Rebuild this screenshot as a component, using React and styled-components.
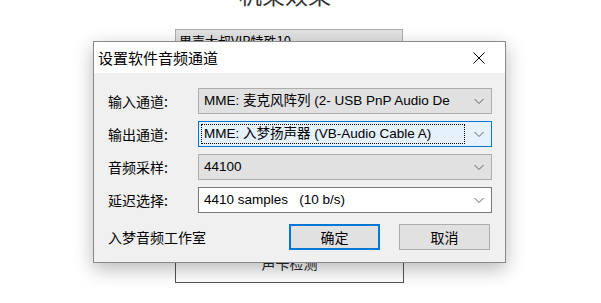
import React from "react";
import styled, { createGlobalStyle } from "styled-components";

const Global = createGlobalStyle`
  html, body { margin: 0; padding: 0; background: #fff; }
  body {
    width: 601px; height: 303px; overflow: hidden;
    font-family: "Liberation Sans", "Noto Sans CJK SC", sans-serif;
  }
`;

const Page = styled.div`
  position: relative;
  width: 601px;
  height: 303px;
  overflow: hidden;
`;

const Back = styled.div`
  display: flex;
  flex-direction: column;
  align-items: flex-start;
  padding-left: 175px;
`;

const Heading = styled.div`
  margin: -21px 0 0 64px;
  font-family: "Noto Sans CJK SC", sans-serif;
  font-size: 23px;
  line-height: 30px;
  color: #333;
`;

const BackSelect = styled.div`
  margin-top: 20px;
  width: 228px;
  height: 22px;
  box-sizing: border-box;
  border: 1px solid #adadad;
  background: #e1e1e1;
  font-family: "Noto Sans CJK SC", sans-serif;
  font-size: 13px;
  line-height: 22px;
  padding-left: 3px;
  color: #000;
`;

const BackButton = styled.div`
  margin-top: 202px;
  width: 229px;
  height: 30px;
  box-sizing: border-box;
  border: 1px solid #555;
  display: flex;
  align-items: flex-start;
  justify-content: center;
  font-family: "Noto Sans CJK SC", sans-serif;
  font-size: 14px;
  line-height: 19px;
  color: #222;
`;

const Dialog = styled.div`
  position: absolute;
  left: 93px;
  top: 41px;
  width: 413px;
  height: 222px;
  box-sizing: border-box;
  border: 1px solid #8a8a8a;
  background: #f0f0f0;
  box-shadow: 0 6px 18px rgba(0, 0, 0, 0.28);
  display: flex;
  flex-direction: column;
`;

const TitleBar = styled.div`
  height: 31px;
  background: #fff;
  display: flex;
  align-items: center;
  justify-content: space-between;
  padding: 0 20px 0 4px;
  font-family: "Noto Sans CJK SC", sans-serif;
  font-size: 15px;
  color: #000;
`;

const Body = styled.div`
  display: flex;
  flex-direction: column;
  gap: 7px;
  padding: 15px 13px 0 14px;
`;

const Row = styled.div`
  display: flex;
  align-items: center;
  height: 26px;
`;

const Label = styled.div`
  width: 90px;
  font-family: "Noto Sans CJK SC", sans-serif;
  font-size: 14px;
  color: #000;
`;

const Combo = styled.div`
  flex: 1;
  height: 26px;
  box-sizing: border-box;
  border: 1px solid ${p => (p.$focus ? "#0078d7" : p.$white ? "#7a7a7a" : "#adadad")};
  background: ${p => (p.$focus ? "#e5f1fb" : p.$white ? "#fff" : "#e1e1e1")};
  display: flex;
  align-items: center;
  padding: 2px 0 2px 2px;
`;

const ComboText = styled.div`
  flex: 1;
  height: 20px;
  box-sizing: border-box;
  border: 1px dotted ${p => (p.$focus ? "#000" : "transparent")};
  padding-left: 2px;
  margin-right: ${p => (p.$focus ? "24px" : "0")};
  font-size: 13.5px;
  line-height: 18px;
  color: #000;
  white-space: nowrap;
  overflow: hidden;
`;

const Chevron = styled.svg`
  width: 24px;
  flex: none;
  margin-left: ${p => (p.$focus ? "-22px" : "0")};
`;

const Footer = styled.div`
  display: flex;
  align-items: center;
  margin-top: 4px;
`;

const Studio = styled.div`
  width: 181px;
  font-family: "Noto Sans CJK SC", sans-serif;
  font-size: 14px;
  color: #000;
`;

const Button = styled.div`
  width: 91px;
  height: 26px;
  box-sizing: border-box;
  border: ${p => (p.$primary ? "2px solid #0078d7" : "1px solid #adadad")};
  background: #e1e1e1;
  display: flex;
  align-items: center;
  justify-content: center;
  margin-right: ${p => (p.$primary ? "19px" : "0")};
  font-family: "Noto Sans CJK SC", sans-serif;
  font-size: 14px;
  color: #000;
`;

const Down = ({ focus }) => (
  <Chevron $focus={focus} viewBox="0 0 24 10" height="10">
    <path d="M7.5 3 L12 7.5 L16.5 3" fill="none" stroke="#606060" strokeWidth="1" />
  </Chevron>
);

const rows = [
  { label: "输入通道:", value: "MME: 麦克风阵列 (2- USB PnP Audio De" },
  { label: "输出通道:", value: "MME: 入梦扬声器 (VB-Audio Cable A)", focus: true },
  { label: "音频采样:", value: "44100" },
  { label: "延迟选择:", value: "4410 samples\u00a0\u00a0\u00a0(10 b/s)", white: true },
];

export default function App() {
  return (
    <Page>
      <Global />
      <Back>
        <Heading>机架效果</Heading>
        <BackSelect>男声大叔VIP特殊10</BackSelect>
        <BackButton>声卡检测</BackButton>
      </Back>
      <Dialog>
        <TitleBar>
          <span>设置软件音频通道</span>
          <svg width="12" height="12" viewBox="0 0 12 12">
            <path d="M0.5 0.5 L11.5 11.5 M11.5 0.5 L0.5 11.5" stroke="#000" strokeWidth="1" />
          </svg>
        </TitleBar>
        <Body>
          {rows.map(r => (
            <Row key={r.label}>
              <Label>{r.label}</Label>
              <Combo $focus={r.focus} $white={r.white}>
                <ComboText $focus={r.focus}>{r.value}</ComboText>
                <Down focus={r.focus} />
              </Combo>
            </Row>
          ))}
          <Footer>
            <Studio>入梦音频工作室</Studio>
            <Button $primary>确定</Button>
            <Button>取消</Button>
          </Footer>
        </Body>
      </Dialog>
    </Page>
  );
}
